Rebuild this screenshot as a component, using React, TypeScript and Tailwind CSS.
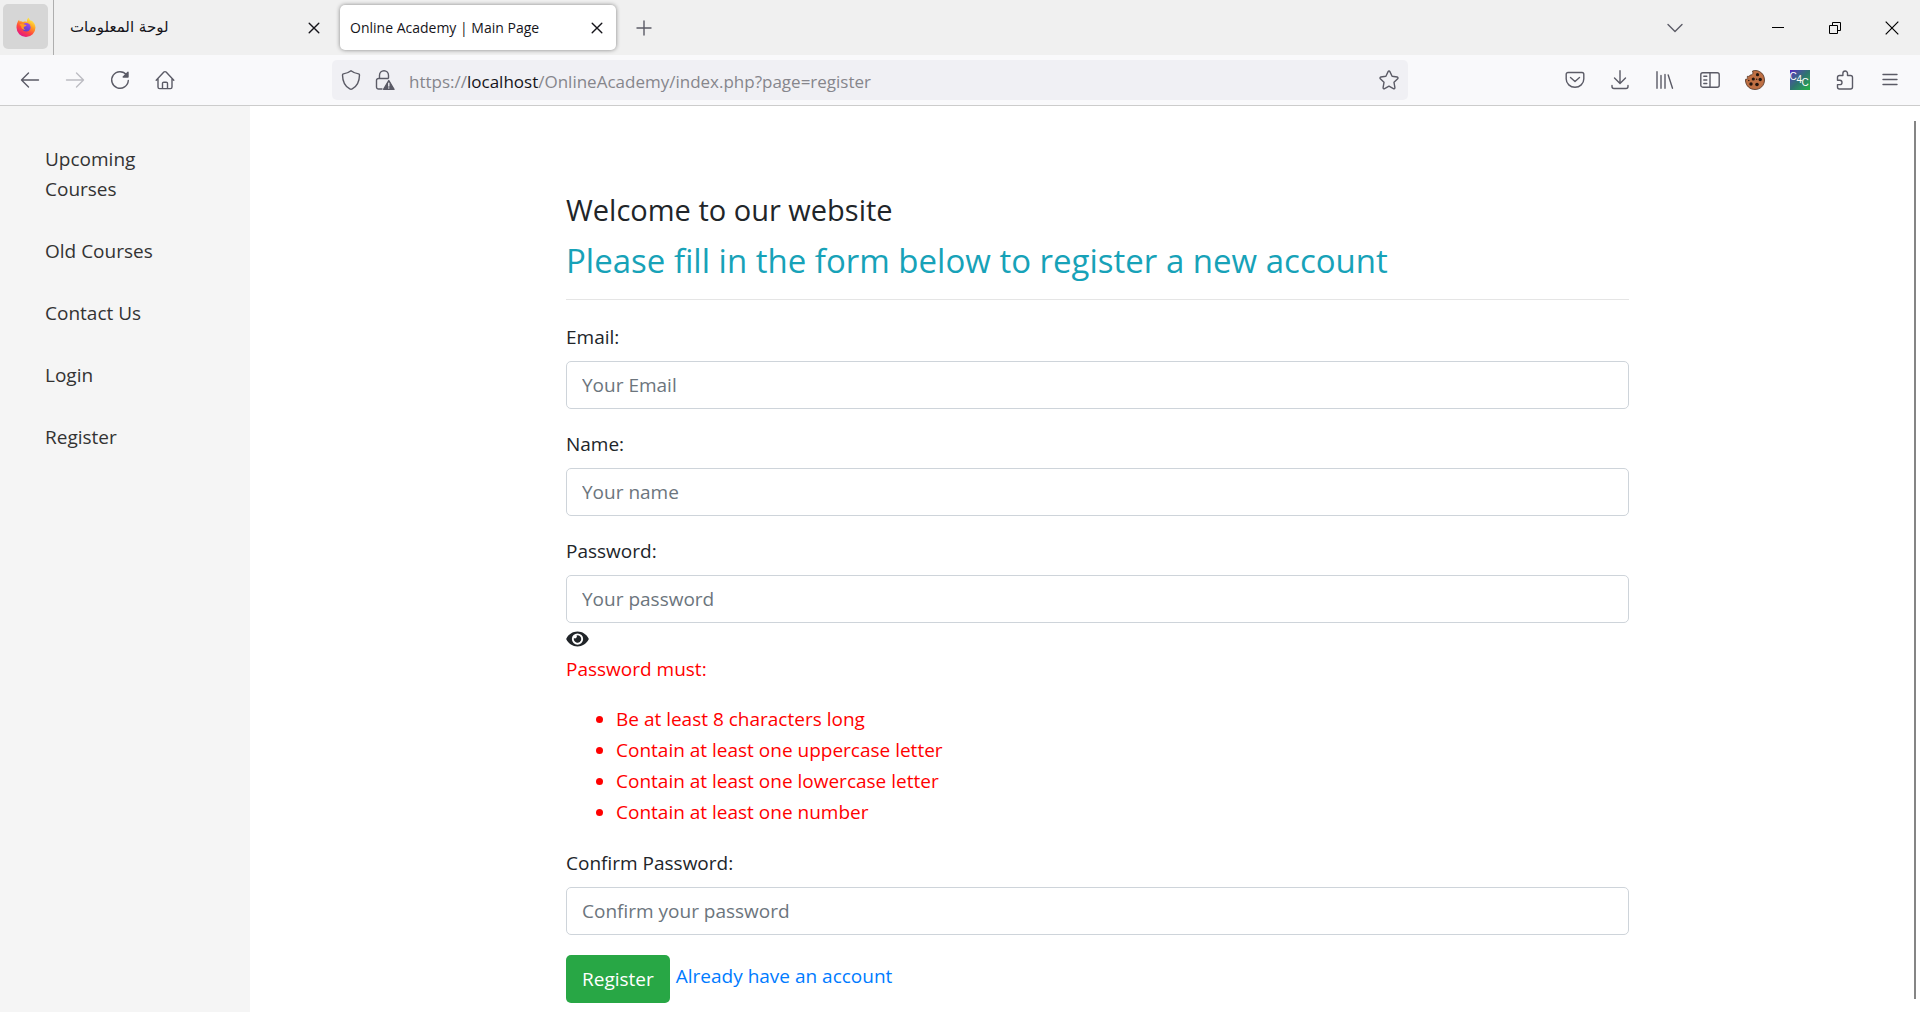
import React from "react";
import { FaEye } from "react-icons/fa";

type Children = { children: React.ReactNode };

function Icon({ children, className = "size-5" }: Children & { className?: string }) {
  return (
    <svg
      viewBox="0 0 20 20"
      className={className}
      fill="none"
      stroke="currentColor"
      strokeWidth="1.4"
      strokeLinecap="round"
      strokeLinejoin="round"
      aria-hidden="true"
    >
      {children}
    </svg>
  );
}

function ToolButton({ label, children, faded = false }: Children & { label: string; faded?: boolean }) {
  return (
    <button
      type="button"
      aria-label={label}
      className={`flex h-10 w-[45px] items-center justify-center ${faded ? "text-[#bcbcc2]" : "text-[#5b5b66]"}`}
    >
      {children}
    </button>
  );
}

function CloseIcon() {
  return (
    <svg viewBox="0 0 12 12" className="size-3" fill="none" stroke="#15141a" strokeWidth="1.4" strokeLinecap="round" aria-hidden="true">
      <path d="M1.2 1.2l9.6 9.6M10.8 1.2l-9.6 9.6" />
    </svg>
  );
}

function FirefoxLogo() {
  return (
    <svg viewBox="0 0 20 20" className="size-5" aria-hidden="true">
      <defs>
        <linearGradient id="fx-body" x1="0.8" y1="0.05" x2="0.25" y2="0.95">
          <stop offset="0" stopColor="#fff44f" />
          <stop offset="0.35" stopColor="#ffa020" />
          <stop offset="0.65" stopColor="#ff4a3d" />
          <stop offset="1" stopColor="#e31587" />
        </linearGradient>
        <linearGradient id="fx-globe" x1="0.7" y1="0" x2="0.3" y2="1">
          <stop offset="0" stopColor="#a04bf0" />
          <stop offset="1" stopColor="#5a3fc8" />
        </linearGradient>
      </defs>
      <path
        d="M12.6 0.6c.3 1.700 1.300 2.400 2.500 3.500.3-.1.400-.3.500-.6 1.600 1.300 3.900 4 3.900 7.100A9.500 9.300 0 0 1 .5 10.600C.5 7.500 1.500 4.700 3.100 2.800c.1.700.300 1.200.6 1.600 1.200-.2 2.400 0 3.300.7 1.500-.7 3-.6 4.100-.2C10.700 3.400 11.300 1.700 12.600.6z"
        fill="url(#fx-body)"
      />
      <circle cx="10.300" cy="10.200" r="4.300" fill="url(#fx-globe)" />
      <path d="M3.500 7.300c1.900-1 3.800-.7 5 .1 1.300.2 2 .600 2 1.100-.5.900-2 .9-2.700 1.500-.3 1.300.4 2.400 1.700 2.800-2.600.4-4.300-1.300-4.300-3.300z" fill="#ff9a26" />
    </svg>
  );
}

function TabStrip() {
  return (
    <header className="flex h-[55px] items-stretch bg-[#f0f0f0] text-[#15141a]">
      <button type="button" aria-label="Firefox View" className="mt-1 ml-[3px] flex size-[45px] items-center justify-center rounded-[5px] bg-[#d6d6d6]">
        <FirefoxLogo />
      </button>
      <div className="ml-[5px] flex w-[287px] items-center justify-between border-l border-[#aeaeae] pr-5 pl-4 text-[14px]">
        <span dir="rtl" className="font-['DejaVu_Sans',sans-serif] text-[15px]">لوحة المعلومات</span>
        <button type="button" aria-label="Close dashboard tab">
          <CloseIcon />
        </button>
      </div>
      <div className="my-[5px] flex w-[276px] items-center justify-between rounded-[5px] bg-white pr-[13px] pl-[10px] text-[14px] shadow-[0_0_4px_rgba(0,0,0,0.45)]">
        <span>Online Academy | Main Page</span>
        <button type="button" aria-label="Close Main Page tab">
          <CloseIcon />
        </button>
      </div>
      <button type="button" aria-label="New tab" className="ml-[5px] flex w-[45px] items-center justify-center text-[#5b5b66]">
        <Icon>
          <path d="M10 3v14M3 10h14" />
        </Icon>
      </button>
      <div className="ml-auto flex items-center text-black">
        <button type="button" aria-label="List all tabs" className="mr-[46px] flex w-[57px] justify-center text-[#5b5b66]">
          <Icon>
            <path d="M3 6.500l7 7 7-7" />
          </Icon>
        </button>
        <button type="button" aria-label="Minimize" className="flex w-[57px] justify-center">
          <svg viewBox="0 0 12 12" className="size-3" shapeRendering="crispEdges" aria-hidden="true">
            <path d="M0 5h12v1H0z" />
          </svg>
        </button>
        <button type="button" aria-label="Restore" className="flex w-[57px] justify-center">
          <svg viewBox="0 0 12 12" className="size-3" fill="none" stroke="#000" aria-hidden="true">
            <path d="M.5 3.500h8v8h-8zM3.500 3.500v-3h8v8h-3" />
          </svg>
        </button>
        <button type="button" aria-label="Close window" className="flex w-[57px] justify-center">
          <svg viewBox="0 0 14 14" className="size-3.5" fill="none" stroke="#000" strokeWidth="1.200" aria-hidden="true">
            <path d="M.7.7l12.600 12.600M13.300.7L.7 13.300" />
          </svg>
        </button>
      </div>
    </header>
  );
}

function Cookie() {
  return (
    <svg viewBox="0 0 20 20" className="size-5" aria-hidden="true">
      <path
        d="M7.500 1c2-.8 4.800-.7 7 .5C17.800 3.200 19.500 6.500 19.500 10c0 5.500-4.200 9.500-9.500 9.500C5 19.500 1 16 .5 11c0-.8 0-1.400.3-2 1 .3 1.700 0 2-.8-.6-.6-.7-1.200-.4-1.900 1.300.4 2.400-.2 2.800-1.300 1.600.2 2.700-.7 2.700-2.200z"
        fill="#bf7044"
        stroke="#4c3021"
        strokeWidth="0.8"
      />
      <g fill="#23150f">
        <circle cx="12.500" cy="4.700" r="1.600" />
        <circle cx="8.300" cy="9" r="1.600" />
        <circle cx="15.200" cy="9.500" r="1.700" />
        <circle cx="6" cy="14" r="1.700" />
        <circle cx="12" cy="14.500" r="1.800" />
        <circle cx="11.700" cy="9.300" r=".7" />
        <circle cx="3.800" cy="10.500" r=".7" />
      </g>
    </svg>
  );
}

function NavBar() {
  return (
    <div className="flex h-[51px] items-center border-b border-[#cccccc] bg-[#f9f9fb] pr-2 pl-[7px]">
      <nav aria-label="Browser navigation" className="flex">
        <ToolButton label="Back">
          <Icon><path d="M18.500 10H1.500M8.500 3l-7 7 7 7" /></Icon>
        </ToolButton>
        <ToolButton label="Forward" faded>
          <Icon><path d="M1.500 10h17M11.500 3l7 7-7 7" /></Icon>
        </ToolButton>
        <ToolButton label="Reload">
          <Icon>
            <path d="M16.500 4.800A8.300 8.300 0 1 0 18.300 10.500" />
            <path d="M18 2.200V7h-4.800z" fill="currentColor" />
          </Icon>
        </ToolButton>
        <ToolButton label="Home">
          <Icon>
            <path d="M1.200 10.200L8.900 2.100a1.500 1.500 0 0 1 2.200 0l7.700 8.100M3 8.500v8.500a1.600 1.600 0 0 0 1.600 1.600h10.800A1.600 1.600 0 0 0 17 17V8.500M7.500 18.500v-5a1.300 1.300 0 0 1 1.300-1.300h2.400a1.300 1.300 0 0 1 1.300 1.300v5" />
          </Icon>
        </ToolButton>
      </nav>

      <div className="mr-[144px] ml-[145px] flex h-10 flex-1 items-center rounded-[5px] bg-[#f0f0f4] px-[9px] text-[#5b5b66]">
        <Icon>
          <path d="M10 .8c2.300 1.800 4.900 2.800 7.600 3.100a1 1 0 0 1 .9 1c-.1 6.400-2.300 11.300-7.300 14a2.500 2.500 0 0 1-2.400 0c-5-2.700-7.200-7.600-7.300-14a1 1 0 0 1 .9-1C5.100 3.600 7.700 2.600 10 .8z" />
        </Icon>
        <Icon className="ml-[14px] size-5">
          <path d="M4.500 8.500V5.300a4.500 4.500 0 0 1 9 0V8M7 19H3.500A2 2 0 0 1 1.500 17v-6.500a2 2 0 0 1 2-2h9.500" />
          <path d="M13.800 10.500l5.200 8.800H8.600z" fill="currentColor" />
          <path d="M13.800 13.300v2.700M13.800 17.900v.1" stroke="#f0f0f4" />
        </Icon>
        <p className="ml-[14px] flex-1 pt-[3px] text-[17px] text-[#86868c]">
          https://<span className="text-[#15141a]">localhost</span>/OnlineAcademy/index.php?page=register
        </p>
        <button type="button" aria-label="Bookmark this page">
          <Icon>
            <path d="M9.100 1.600a1 1 0 0 1 1.800 0l2.200 4.700 5.100.7a1 1 0 0 1 .5 1.700L15 12.300l.9 5.300a1 1 0 0 1-1.500 1L10 16.200l-4.400 2.400a1 1 0 0 1-1.500-1l.9-5.300L1.300 8.700A1 1 0 0 1 1.800 7l5.100-.7z" />
          </Icon>
        </button>
      </div>

      <div className="flex">
        <ToolButton label="Save to Pocket">
          <Icon>
            <path d="M3 2.500h14a1.800 1.800 0 0 1 1.800 1.800V9a8.800 8.300 0 0 1-17.600 0V4.300A1.800 1.800 0 0 1 3 2.500zM5.500 7.500L10 11.500l4.500-4" />
          </Icon>
        </ToolButton>
        <ToolButton label="Downloads">
          <Icon>
            <path d="M10 .8v12.500M4.500 8l5.500 5.500L15.500 8M2 15.500v1a2 2 0 0 0 2 2h12a2 2 0 0 0 2-2v-1" />
          </Icon>
        </ToolButton>
        <ToolButton label="Library">
          <Icon><path d="M2 1.800v16.400M6 5.500v12.700M10 4.500v13.700M13.200 5l4.300 13.200" /></Icon>
        </ToolButton>
        <ToolButton label="Sidebars">
          <Icon>
            <rect x=".8" y="2.800" width="18.400" height="14.400" rx="2" />
            <path d="M10 3v14M3.800 6.300h3M3.800 10h3M3.800 13.500h3" />
          </Icon>
        </ToolButton>
        <ToolButton label="Cookie editor"><Cookie /></ToolButton>
        <ToolButton label="C4C extension">
          <span className="relative block size-5 bg-linear-135 from-[#5519c0] via-[#2f7370] to-[#22b43c] font-['Liberation_Sans',sans-serif] text-[10px] leading-3 text-white">
            <span className="absolute top-px left-0">C</span>
            <span className="absolute top-1 left-[7px]">4</span>
            <span className="absolute top-[7px] left-[12px]">C</span>
          </span>
        </ToolButton>
        <ToolButton label="Extensions">
          <Icon>
            <path d="M4.500 19h11a2 2 0 0 0 2-2V7.500a2 2 0 0 0-2-2h-3V3.300a2.300 2.300 0 0 0-4.600 0v2.200H4.500a2 2 0 0 0-2 2v2.700h2.300a2.200 2.200 0 0 1 0 4.400H2.500V17a2 2 0 0 0 2 2z" />
          </Icon>
        </ToolButton>
        <ToolButton label="Open application menu">
          <Icon><path d="M3 4.500h14M3 9.500h14M3 14.500h14" /></Icon>
        </ToolButton>
      </div>
    </div>
  );
}

const links = ["Upcoming Courses", "Old Courses", "Contact Us", "Login", "Register"];

function Sidebar() {
  return (
    <aside className="w-[250px] shrink-0 bg-[#f5f5f5] pt-[38px] pr-20 pl-[45px]">
      <ul className="flex flex-col gap-8">
        {links.map((link) => (
          <li key={link} className="leading-[30px] text-[#333333]">
            <a href="#" className="block">{link}</a>
          </li>
        ))}
      </ul>
    </aside>
  );
}

function Field({ id, label, placeholder, type = "text" }: { id: string; label: string; placeholder: string; type?: string }) {
  return (
    <div>
      <label htmlFor={id} className="mb-2 block leading-[31px]">{label}</label>
      <input
        id={id}
        type={type}
        placeholder={placeholder}
        className="block h-12 w-full rounded-[5px] border border-[#ced4da] bg-white px-[15px] placeholder:text-[#6c757d]"
      />
    </div>
  );
}

const rules = [
  "Be at least 8 characters long",
  "Contain at least one uppercase letter",
  "Contain at least one lowercase letter",
  "Contain at least one number",
];

function RegisterForm() {
  return (
    <form className="mx-auto w-full max-w-[1063px] pt-[86px]">
      <h1 className="text-[29px] leading-9">Welcome to our website</h1>
      <h2 className="mt-[11px] text-[33px] leading-[43px] text-[#17a2b8]">Please fill in the form below to register a new account</h2>
      <hr className="mt-[17px] mb-[22px] border-[#e5e5e5]" />
      <div className="flex flex-col gap-5">
        <Field id="email" type="email" label="Email:" placeholder="Your Email" />
        <Field id="name" label="Name:" placeholder="Your name" />
        <div>
          <Field id="password" type="password" label="Password:" placeholder="Your password" />
          <button type="button" aria-label="Show password" className="flex h-[31px] items-center">
            <FaEye className="h-5 w-[23px]" />
          </button>
          <div className="leading-[31px] text-[#ff0000]">
            <p>Password must:</p>
            <ul className="mt-[19px] list-disc pl-[50px]">
              {rules.map((rule) => (
                <li key={rule}>{rule}</li>
              ))}
            </ul>
          </div>
        </div>
        <Field id="confirm" type="password" label="Confirm Password:" placeholder="Confirm your password" />
        <div className="flex items-start gap-[6px]">
          <button type="submit" className="h-12 rounded-[5px] bg-[#28a745] px-4 text-white">Register</button>
          <a href="#" className="leading-[43px] text-[#007bff]">Already have an account</a>
        </div>
      </div>
    </form>
  );
}

export default function App() {
  return (
    <div className="flex h-screen flex-col overflow-hidden bg-white font-['Open_Sans','Noto_Sans',sans-serif]">
      <TabStrip />
      <NavBar />
      <div className="relative flex min-h-0 flex-1 text-[19px] text-[#212529]">
        <Sidebar />
        <main className="min-w-0 flex-1 pl-[25px]">
          <RegisterForm />
        </main>
        <div className="absolute top-[15px] right-1 bottom-[13px] w-0.5 bg-[#858585]" />
      </div>
    </div>
  );
}
